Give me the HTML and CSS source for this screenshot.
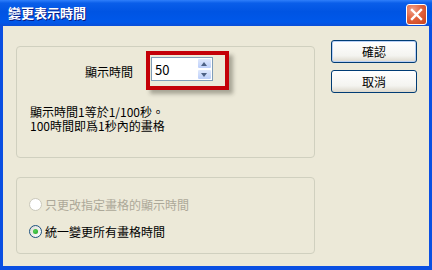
FILE: index.html
```html
<!DOCTYPE html>
<html lang="zh-Hant">
<head>
    <meta charset="UTF-8">
    <title>變更表示時間</title>
    <link rel="stylesheet" href="styles.css">
</head>
<body>
    <div class="window">
        <div class="titlebar">
            <span class="title">變更表示時間</span>
            <button class="close-btn" aria-label="關閉">
                <svg width="13" height="13" viewBox="0 0 13 13">
                    <path d="M2 2 L11 11 M11 2 L2 11" stroke="#fff" stroke-width="2.4" stroke-linecap="square"/>
                </svg>
            </button>
        </div>

        <div class="client">
            <div class="groups">
                <div class="group group-time">
                    <div class="time-row">
                        <span class="time-label">顯示時間</span>
                        <div class="spin">
                            <span class="spin-value">50</span>
                            <div class="spin-btns">
                                <span class="spin-btn spin-up"></span>
                                <span class="spin-btn spin-down"></span>
                            </div>
                            <!-- red highlight drawn over the control -->
                            <div class="mark"></div>
                        </div>
                    </div>
                    <div class="note">
                        <div>顯示時間1等於1/100秒。</div>
                        <div>100時間即爲1秒內的畫格</div>
                    </div>
                </div>

                <div class="group group-mode">
                    <div class="radio disabled">
                        <span class="radio-dot"></span>
                        <span class="radio-text">只更改指定畫格的顯示時間</span>
                    </div>
                    <div class="radio">
                        <span class="radio-dot checked"></span>
                        <span class="radio-text">統一變更所有畫格時間</span>
                    </div>
                </div>
            </div>

            <div class="actions">
                <button class="xp-btn default">確認</button>
                <button class="xp-btn">取消</button>
            </div>
        </div>
    </div>
</body>
</html>
```

FILE: styles.css
```css
body {
    margin: 0;
    font-family: "Noto Sans CJK TC", "Noto Sans", sans-serif;
    font-size: 12px;
    color: #000;
    background: #ece9d8;
}

.window {
    width: 432px;
    height: 270px;
    display: flex;
    flex-direction: column;
    background: #0a4fe2;
    box-sizing: border-box;
}

.titlebar {
    height: 26px;
    flex: none;
    display: flex;
    align-items: center;
    justify-content: space-between;
    padding: 0 5px 0 8px;
    background: linear-gradient(#2f7ffa 0%, #0a5ee9 12%, #0054e3 45%, #0058ea 85%, #0a4fd8 100%);
}

.title {
    color: #fff;
    font-weight: bold;
    font-size: 13px;
    line-height: 14px;
    text-shadow: 1px 1px 0 #0a1a80;
}

.close-btn {
    width: 21px;
    height: 21px;
    padding: 0;
    margin-top: 2px;
    border: 1px solid #fff;
    border-radius: 3px;
    background: radial-gradient(circle at 30% 25%, #f0a08a 0%, #e2633d 45%, #c8411b 100%);
    display: flex;
    align-items: center;
    justify-content: center;
}

.client {
    flex: 1;
    display: flex;
    gap: 16px;
    margin: 0 3px 4px 3px;
    padding: 14px 0 0 13px;
    background: #ece9d8;
}

.groups {
    display: flex;
    flex-direction: column;
    gap: 19px;
    margin-top: 6px;
}

.group {
    width: 299px;
    box-sizing: border-box;
    border: 1px solid #d0d0bf;
    border-radius: 4px;
}

.group-time {
    height: 112px;
    padding: 10px 0 0 13px;
}

.time-row {
    display: flex;
    align-items: flex-start;
    gap: 18px;
    padding-left: 55px;
}

.time-label {
    line-height: 13px;
    margin-top: 8px;
}

.spin {
    position: relative;
    width: 62px;
    height: 24px;
    box-sizing: border-box;
    border: 1px solid #7f9db9;
    background: #fff;
    display: flex;
    justify-content: space-between;
}

.spin-value {
    font-size: 13px;
    line-height: 13px;
    padding: 5px 0 0 3px;
}

.spin-btns {
    width: 15px;
    display: flex;
    flex-direction: column;
}

.spin-btn {
    flex: 1;
    position: relative;
    background: linear-gradient(#dfe8fc, #bccffa);
    border: 1px solid #fff;
    border-radius: 2px;
}

.spin-btn::after {
    content: "";
    position: absolute;
    left: 3px;
    top: 3px;
    border-left: 3.5px solid transparent;
    border-right: 3.5px solid transparent;
}

.spin-up::after {
    border-bottom: 4px solid #4d6185;
}

.spin-down::after {
    border-top: 4px solid #4d6185;
}

.mark {
    position: absolute;
    left: -6px;
    top: -7px;
    width: 83px;
    height: 39px;
    box-sizing: border-box;
    border: 4px solid #c40008;
    box-shadow: 4px 4px 4px rgba(40, 40, 30, 0.35);
}

.note {
    margin-top: 24px;
    line-height: 14px;
}

.group-mode {
    height: 77px;
    padding: 20px 0 0 12px;
    display: flex;
    flex-direction: column;
    gap: 14px;
}

.radio {
    display: flex;
    align-items: center;
    gap: 3px;
    height: 13px;
}

.radio-text {
    line-height: 13px;
}

.radio.disabled .radio-text {
    color: #aca899;
}

.radio-dot {
    width: 13px;
    height: 13px;
    box-sizing: border-box;
    border-radius: 50%;
    border: 1px solid #1c5180;
    background: linear-gradient(135deg, #dcdcd4, #fff);
    position: relative;
}

.radio.disabled .radio-dot {
    border-color: #cac8bb;
    background: #fff;
}

.radio-dot.checked::after {
    content: "";
    position: absolute;
    left: 3px;
    top: 3px;
    width: 5px;
    height: 5px;
    border-radius: 50%;
    background: radial-gradient(circle at 40% 40%, #55d35a, #21a121);
}

.actions {
    display: flex;
    flex-direction: column;
    gap: 7px;
}

.xp-btn {
    width: 86px;
    height: 23px;
    padding: 0;
    font-family: inherit;
    font-size: 12px;
    color: #000;
    border: 1px solid #003c74;
    border-radius: 3px;
    background: linear-gradient(#ffffff, #f4f4f0 70%, #dcd8cc);
}

.xp-btn.default {
    box-shadow: inset 0 0 0 1px #b9d0f5;
}
```
